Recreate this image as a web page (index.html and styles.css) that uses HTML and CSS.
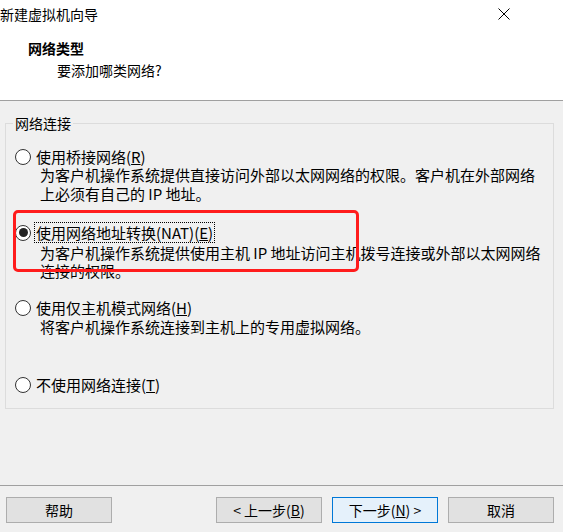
FILE: index.html
```html
<!DOCTYPE html>
<html lang="zh-CN">
<head>
<meta charset="utf-8">
<title>新建虚拟机向导</title>
<link rel="stylesheet" href="styles.css">
</head>
<body>
<div class="dialog">
  <header class="header">
    <div class="titlebar">
      <span class="title">新建虚拟机向导</span>
      <svg class="close" width="12" height="12" viewBox="0 0 12 12"><path d="M0.5 0.5 L11.5 11.5 M11.5 0.5 L0.5 11.5" stroke="#000" stroke-width="1" fill="none"/></svg>
    </div>
    <div class="heading">网络类型</div>
    <div class="subheading">要添加哪类网络?</div>
  </header>

  <main class="main">
    <fieldset class="group">
      <legend class="legend">网络连接</legend>

      <div class="option opt1">
        <div class="option-row">
          <span class="radio"></span>
          <span class="option-label">使用桥接网络(<u>R</u>)</span>
        </div>
        <div class="desc">为客户机操作系统提供直接访问外部以太网网络的权限。客户机在外部网络<br>上必须有自己的 IP 地址。</div>
      </div>

      <div class="option opt2">
        <div class="option-row">
          <span class="radio checked"></span>
          <span class="option-label focused">使用网络地址转换(NAT)(<u>E</u>)</span>
        </div>
        <div class="desc desc2">为客户机操作系统提供使用主机 IP 地址访问主机拨号连接或外部以太网网络<br>连接的权限。</div>
        <div class="highlight"></div>
      </div>

      <div class="option opt3">
        <div class="option-row">
          <span class="radio"></span>
          <span class="option-label">使用仅主机模式网络(<u>H</u>)</span>
        </div>
        <div class="desc desc3">将客户机操作系统连接到主机上的专用虚拟网络。</div>
      </div>

      <div class="option opt4">
        <div class="option-row">
          <span class="radio"></span>
          <span class="option-label">不使用网络连接(<u>T</u>)</span>
        </div>
      </div>
    </fieldset>
  </main>

  <footer class="footer">
    <button class="btn">帮助</button>
    <div class="spacer"></div>
    <div class="nav">
      <button class="btn">&lt; 上一步(<u>B</u>)</button>
      <button class="btn primary">下一步(<u>N</u>) &gt;</button>
      <button class="btn">取消</button>
    </div>
  </footer>
</div>
</body>
</html>
```

FILE: styles.css
```css
* { box-sizing: border-box; }

html, body {
  margin: 0;
  padding: 0;
}

body {
  background: #f0f0f0;
  font-family: "Noto Sans CJK SC", "Microsoft YaHei", sans-serif;
  color: #000;
}

.dialog {
  width: 563px;
  height: 532px;
  display: flex;
  flex-direction: column;
}

.header {
  background: #fff;
  height: 101px;
  border-bottom: 1px solid #a0a0a0;
  font-size: 14px;
}

.titlebar {
  display: flex;
  align-items: center;
  justify-content: space-between;
  height: 20px;
  margin-top: 4px;
  line-height: 20px;
}

.title {
  font-size: 14px;
}

.close {
  margin-right: 53px;
  margin-top: 0px;
}

.heading {
  font-weight: bold;
  line-height: 20px;
  margin-top: 14px;
  padding-left: 28px;
}

.subheading {
  line-height: 20px;
  margin-top: 2px;
  padding-left: 57px;
}

.main {
  padding: 12px 9px 0 5px;
}

.group {
  margin: 0;
  padding: 0 0 15px 0;
  border: 1px solid #dcdcdc;
  min-width: 0;
}

.legend {
  font-size: 14px;
  line-height: 20px;
  margin-left: 7px;
  padding: 0 2px;
}

.option {
  position: relative;
  font-size: 15px;
}

.option-row {
  display: flex;
  align-items: center;
  height: 17px;
}

.opt1 { margin-top: 15px; }
.opt2 { margin-top: 21px; }
.opt3 { margin-top: 19px; }
.opt4 { margin-top: 40px; }

.radio {
  width: 16px;
  height: 16px;
  border: 1px solid #333;
  border-radius: 50%;
  background: #fff;
  margin-left: 9px;
  margin-right: 5px;
  flex: none;
  display: flex;
  align-items: center;
  justify-content: center;
}

.radio.checked::after {
  content: "";
  width: 9px;
  height: 9px;
  border-radius: 50%;
  background: #222;
}

.option-label {
  line-height: 17px;
  white-space: nowrap;
}

.option-label.focused {
  display: inline-block;
  margin-left: -1px;
  padding: 1px 1px;
  line-height: 17px;
  outline: 1px dotted #000;
  outline-offset: 0;
}

.desc {
  padding-left: 34px;
  line-height: 19px;
  white-space: nowrap;
}

.desc2 { margin-top: 3px; line-height: 18px; }
.desc3 { margin-top: 1px; }

.highlight {
  position: absolute;
  left: 7px;
  top: -14px;
  width: 346px;
  height: 62px;
  border: 3px solid #ff1c1c;
  border-radius: 5px;
  pointer-events: none;
}

.footer {
  margin-top: auto;
  border-top: 1px solid #a0a0a0;
  padding: 11px 9px 9px 6px;
  display: flex;
  align-items: center;
}

.spacer { flex: 1; }

.nav {
  display: flex;
  gap: 10px;
}

.btn {
  width: 106px;
  height: 26px;
  background: #e1e1e1;
  border: 1px solid #adadad;
  font-family: "Noto Sans CJK SC", "Microsoft YaHei", sans-serif;
  font-size: 14px;
  line-height: 20px;
  color: #000;
  padding: 0;
  margin: 0;
}

.btn.primary {
  background: #e5f1fb;
  border-color: #0078d7;
}
```
